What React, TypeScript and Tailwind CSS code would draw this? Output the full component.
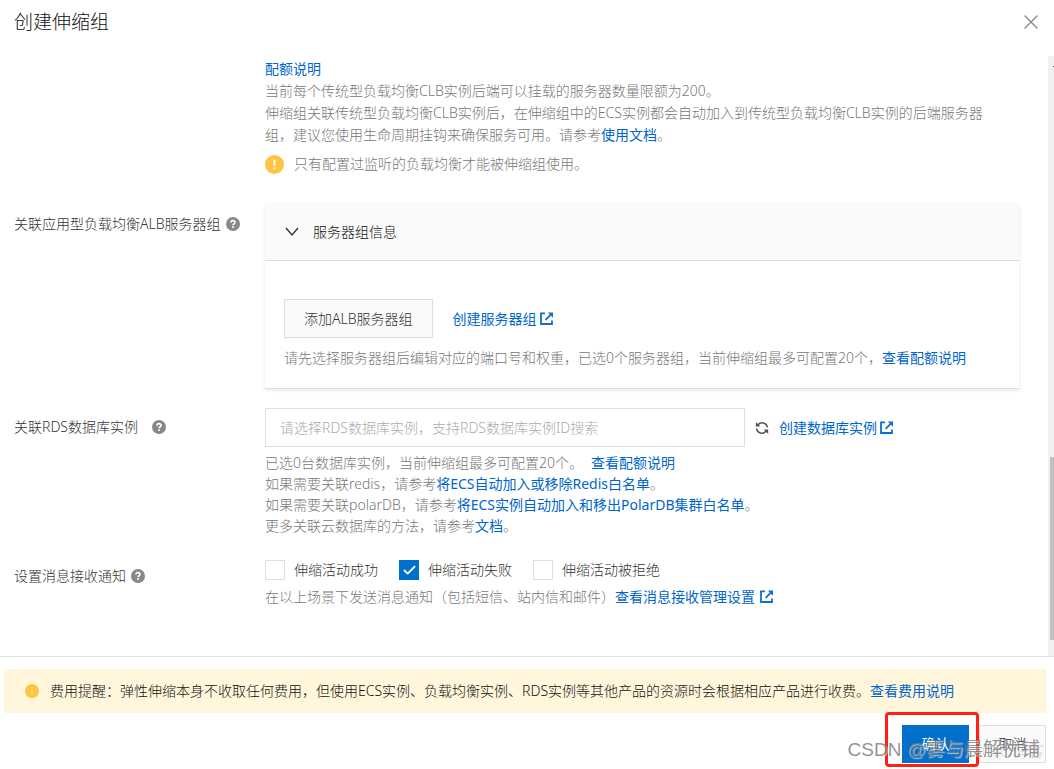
import { Check, X } from "lucide-react";
import type { ReactNode } from "react";

function Link({ children }: { children: ReactNode }) {
  return (
    <a href="#" className="font-normal text-[#0066cc]">
      {children}
    </a>
  );
}

function ExternalIcon({ className = "" }: { className?: string }) {
  return (
    <svg
      viewBox="0 0 13 13"
      className={`inline-block size-[13px] align-[-1px] ${className}`}
      fill="none"
      stroke="#0f6fce"
      strokeWidth="1.8"
      aria-hidden="true"
    >
      <path d="M5 1.4H1v10.6H12V8.4" />
      <path d="M5.6 7.8 10.6 2.8" />
      <path d="M7.8 0.5H13v5.2Z" fill="#0f6fce" stroke="none" />
    </svg>
  );
}

function HelpIcon() {
  return (
    <svg viewBox="0 0 14 14" className="size-[14px] shrink-0" aria-hidden="true">
      <circle cx="7" cy="7" r="7" fill="#888" />
      <path
        d="M5 5.6c0-1.3.9-2 2-2s2 .7 2 1.8c0 1.4-1.9 1.3-1.9 2.9"
        fill="none"
        stroke="#fff"
        strokeWidth="1.6"
      />
      <rect x="6.2" y="9.3" width="1.8" height="1.7" fill="#fff" />
    </svg>
  );
}

function WarningIcon({ className, mark }: { className: string; mark: string }) {
  return (
    <svg viewBox="0 0 20 20" className={`shrink-0 ${className}`} aria-hidden="true">
      <circle cx="10" cy="10" r="10" fill="#ffc440" />
      <rect x="9" y="5" width="2" height="6.5" fill={mark} />
      <rect x="9" y="13" width="2" height="2" fill={mark} />
    </svg>
  );
}

function RefreshIcon() {
  return (
    <svg
      viewBox="0 0 14 14"
      className="size-[14px]"
      fill="none"
      stroke="#555"
      strokeWidth="1.5"
      aria-hidden="true"
    >
      <path d="M3 3.8A5.3 5.3 0 0 1 12.4 6.4" />
      <path d="M11 10.2A5.3 5.3 0 0 1 1.6 7.6" />
      <path d="M0.8 1v4.6h4.6Z" fill="#555" stroke="none" />
      <path d="M13.2 13V8.4H8.6Z" fill="#555" stroke="none" />
    </svg>
  );
}

function CheckOption({ label, checked }: { label: string; checked?: boolean }) {
  return (
    <label className="flex items-center gap-[9px] text-[#333]">
      <span className="relative flex size-5">
        <input
          type="checkbox"
          defaultChecked={checked}
          className="peer size-full appearance-none border border-[#dedede] bg-white checked:border-[#0070cc] checked:bg-[#0070cc]"
        />
        <Check
          strokeWidth={3}
          className="pointer-events-none absolute inset-0 m-auto hidden size-[15px] text-white peer-checked:block"
        />
      </span>
      {label}
    </label>
  );
}

function Row({ label, children }: { label: ReactNode; children: ReactNode }) {
  return (
    <div className="flex">
      <div className="w-[251px] shrink-0 text-[#333]">{label}</div>
      <div className="min-w-0 flex-1">{children}</div>
    </div>
  );
}

export default function App() {
  return (
    <div className="relative flex min-h-screen flex-col bg-white font-['Noto_Sans','Noto_Sans_CJK_SC',sans-serif] text-[14px] leading-[22px] font-light">
      <header className="flex h-[56px] items-start justify-between pt-[10px] pr-[11px] pl-[14px]">
        <h1 className="text-[19px] leading-6 text-[#111]">创建伸缩组</h1>
        <button type="button" aria-label="关闭" className="text-[#888]">
          <X size={24} strokeWidth={1.4} />
        </button>
      </header>

      <main className="flex flex-1 border-b border-[#dedede]">
        <div className="min-w-0 flex-1 pr-[29px] pl-[14px]">
          <Row label={null}>
            <div className="pt-[2px] pr-[14px] text-[#777]">
              <p>
                <Link>配额说明</Link>
              </p>
              <p>当前每个传统型负载均衡CLB实例后端可以挂载的服务器数量限额为200。</p>
              <p>
                伸缩组关联传统型负载均衡CLB实例后，在伸缩组中的ECS实例都会自动加入到传统型负载均衡CLB实例的后端服务器组，建议您使用生命周期挂钩来确保服务可用。请参考
                <Link>使用文档</Link>。
              </p>
              <p className="flex items-center gap-[10px] pt-[7px]">
                <WarningIcon className="size-[19px]" mark="#fff" />
                只有配置过监听的负载均衡才能被伸缩组使用。
              </p>
            </div>
          </Row>

          <div className="pt-[29px]">
            <Row
              label={
                <span className="flex items-center gap-[5px] pt-[9px]">
                  关联应用型负载均衡ALB服务器组
                  <HelpIcon />
                </span>
              }
            >
              <section className="border-b border-[#dedede] shadow-[0_1px_4px_rgba(0,0,0,0.1)]">
                <button
                  type="button"
                  className="flex h-[57px] w-full items-center gap-[14px] border-b border-[#dedede] bg-[#fafafa] px-5 text-[#111]"
                >
                  <svg
                    viewBox="0 0 14 10"
                    className="h-[10px] w-[14px]"
                    fill="none"
                    stroke="#333"
                    strokeWidth="1.4"
                    aria-hidden="true"
                  >
                    <path d="M1 1l6 7 6-7" />
                  </svg>
                  服务器组信息
                </button>
                <div className="px-[19px] pt-[38px] pb-[19px]">
                  <div className="flex items-center gap-5">
                    <button
                      type="button"
                      className="h-[39px] border border-[#dedede] bg-[#fafafa] px-[19px] text-[#333]"
                    >
                      添加ALB服务器组
                    </button>
                    <a href="#" className="font-normal text-[#0066cc]">
                      创建服务器组
                      <ExternalIcon className="ml-[3px]" />
                    </a>
                  </div>
                  <p className="pt-[9px] text-[#777]">
                    请先选择服务器组后编辑对应的端口号和权重，已选0个服务器组，当前伸缩组最多可配置20个，
                    <Link>查看配额说明</Link>
                  </p>
                </div>
              </section>
            </Row>
          </div>

          <div className="pt-[19px]">
            <Row
              label={
                <label htmlFor="rds" className="flex items-center gap-[14px] pt-2">
                  关联RDS数据库实例
                  <HelpIcon />
                </label>
              }
            >
              <div className="flex items-center">
                <input
                  id="rds"
                  type="text"
                  placeholder="请选择RDS数据库实例，支持RDS数据库实例ID搜索"
                  className="h-[39px] w-[480px] border border-[#dedede] px-[14px] outline-none placeholder:text-[#aaa]"
                />
                <button type="button" aria-label="刷新" className="ml-[10px]">
                  <RefreshIcon />
                </button>
                <a href="#" className="ml-[10px] font-normal text-[#0066cc]">
                  创建数据库实例
                  <ExternalIcon className="ml-[3px]" />
                </a>
              </div>
              <div className="pt-[5px] leading-[21px] text-[#777]">
                <p>
                  已选0台数据库实例，当前伸缩组最多可配置20个。
                  <span className="pl-2">
                    <Link>查看配额说明</Link>
                  </span>
                </p>
                <p>
                  如果需要关联redis，请参考
                  <Link>将ECS自动加入或移除Redis白名单</Link>。
                </p>
                <p>
                  如果需要关联polarDB，请参考
                  <Link>将ECS实例自动加入和移出PolarDB集群白名单</Link>。
                </p>
                <p>
                  更多关联云数据库的方法，请参考<Link>文档</Link>。
                </p>
              </div>
            </Row>
          </div>

          <div className="pt-[23px] pb-[47px]">
            <Row
              label={
                <span className="flex items-center gap-[5px] pt-[6px]">
                  设置消息接收通知
                  <HelpIcon />
                </span>
              }
            >
              <div className="flex gap-[21px]">
                <CheckOption label="伸缩活动成功" />
                <CheckOption label="伸缩活动失败" checked />
                <CheckOption label="伸缩活动被拒绝" />
              </div>
              <p className="pt-[5px] text-[#777]">
                在以上场景下发送消息通知（包括短信、站内信和邮件）
                <a href="#" className="font-normal text-[#0066cc]">
                  查看消息接收管理设置
                  <ExternalIcon className="ml-[5px]" />
                </a>
              </p>
            </Row>
          </div>
        </div>

        {/* Scrollbar */}
        <div className="flex w-[6px] flex-col bg-[#f1f1f1] pl-[2px]">
          <div className="flex h-[20px] items-start justify-end pt-[10px]">
            <div className="h-px w-px bg-[#505050]" />
          </div>
          <div className="flex-[381]" />
          <div className="flex-[183] bg-[#c1c1c1]" />
          <div className="flex-[16]" />
        </div>
      </main>

      <footer className="pt-3 pr-2 pb-[6px] pl-1">
        <div className="flex h-[44px] items-center gap-[11px] bg-[#fff6db] px-[21px] text-[#111]">
          <WarningIcon className="size-[14px]" mark="#ffe3a0" />
          <p>
            费用提醒：弹性伸缩本身不收取任何费用，但使用ECS实例、负载均衡实例、RDS实例等其他产品的资源时会根据相应产品进行收费。
            <Link>查看费用说明</Link>
          </p>
        </div>
        <div className="flex justify-end gap-[10px] pt-3">
          <div className="relative">
            <button type="button" className="h-[38px] w-[67px] bg-[#0070cc] font-normal text-white">
              确认
            </button>
            <div className="pointer-events-none absolute -top-[13px] -right-[10px] -bottom-1 -left-[17px] rounded border-[3px] border-[#ff2014]" />
          </div>
          <button
            type="button"
            className="h-[38px] w-[67px] border border-[#dedede] bg-[#fafafa] text-[#333]"
          >
            取消
          </button>
        </div>
      </footer>

      {/* Watermarks */}
      <div className="pointer-events-none absolute right-[10px] bottom-[6px] text-[16px] leading-6 whitespace-nowrap text-[#999]/40">
        @51CTO博客
      </div>
      <div className="pointer-events-none absolute right-[14px] bottom-[5px] font-['Liberation_Sans','Noto_Sans_CJK_SC',sans-serif] text-[19px] leading-7 font-normal whitespace-nowrap text-[#777]/80 [text-shadow:1px_1px_1px_rgba(255,255,255,0.6)]">
        CSDN @雾与晨解忧铺
      </div>
    </div>
  );
}
